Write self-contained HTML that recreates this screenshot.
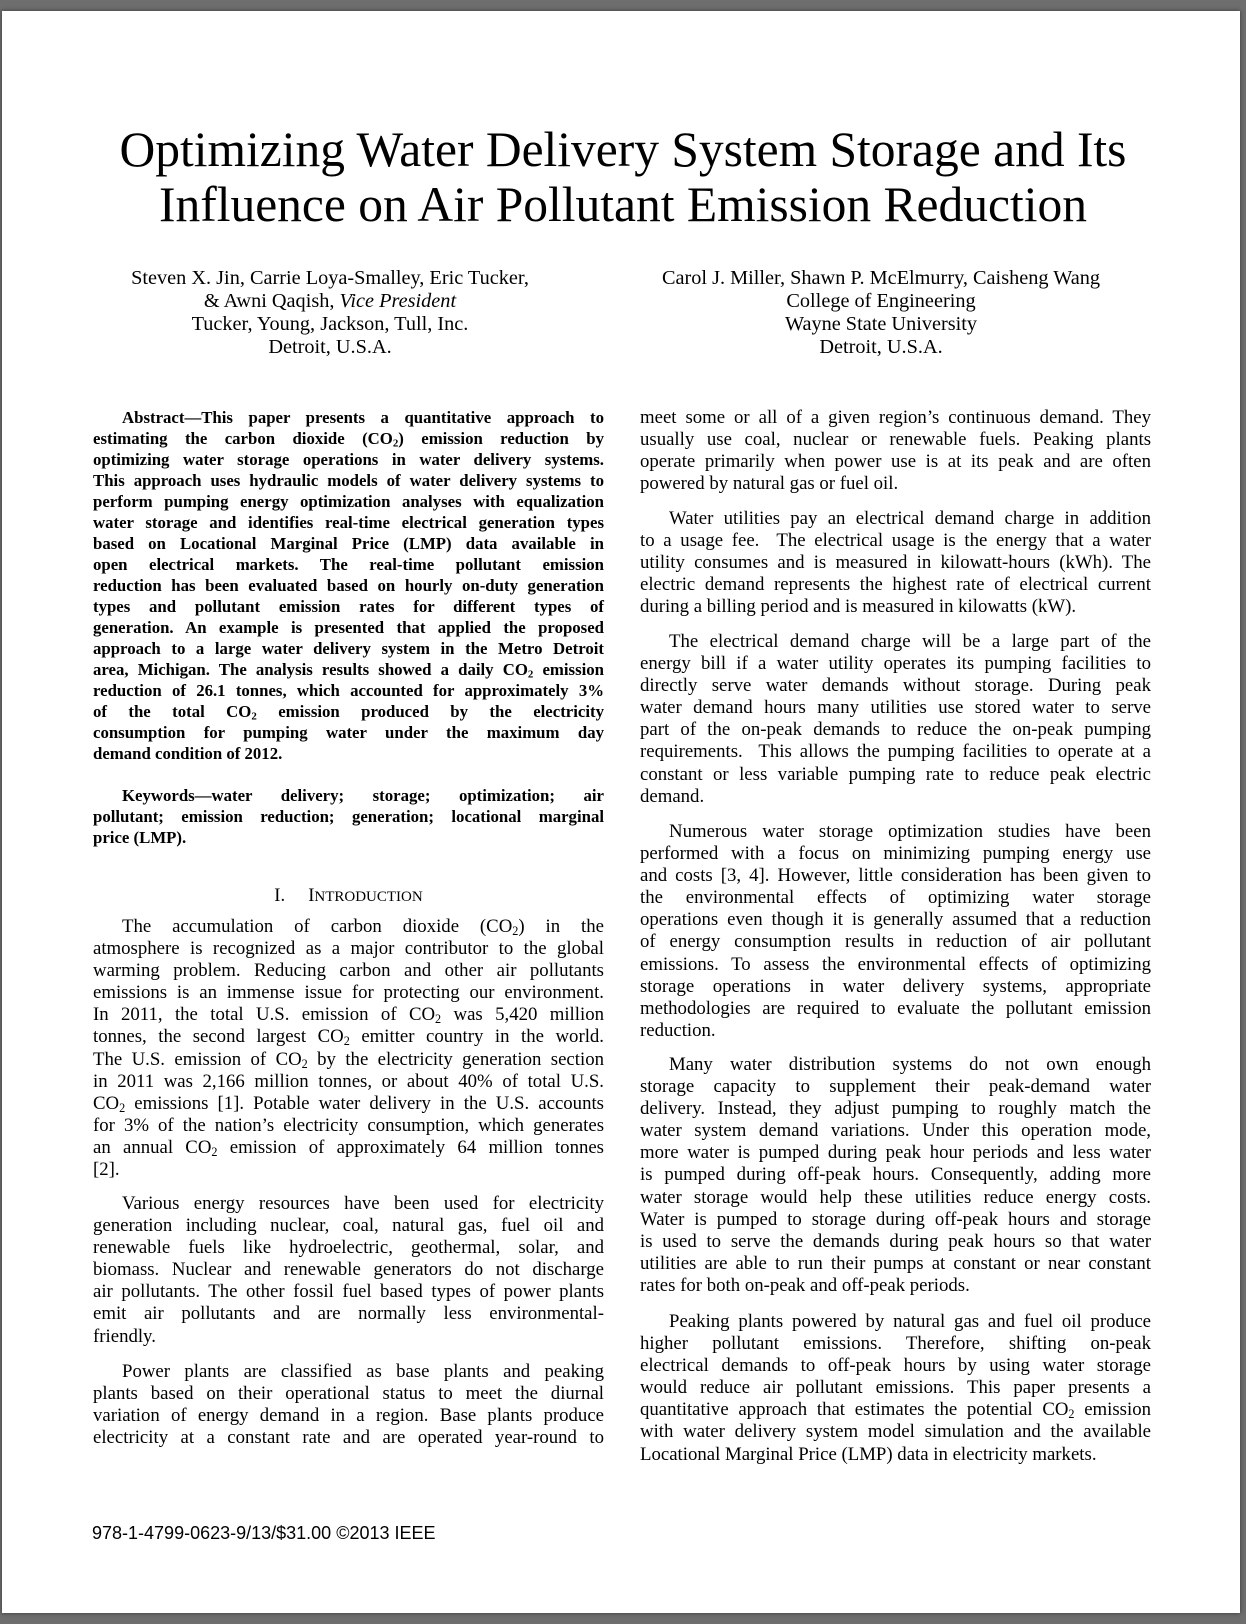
<!DOCTYPE html>
<html><head><meta charset="utf-8"><style>
html,body{margin:0;padding:0}
body{width:1246px;height:1624px;background:#6e6e6e;position:relative;overflow:hidden;font-family:"Liberation Serif",serif;color:#000}
#page{position:absolute;left:2px;top:11px;width:1238px;height:1602px;background:#fff;box-shadow:0 0 4px #333}
.t{position:absolute;left:0;width:1246px;text-align:center;font-size:49.5px;line-height:55px}
.au{position:absolute;text-align:center;font-size:20.3px;line-height:23px;width:560px}
.p{position:absolute;width:511px;font-size:18.8px;line-height:22.1px}
.p span,.a span{display:block;text-align:justify;text-align-last:justify;white-space:nowrap}
.p span.l,.a span.l{text-align-last:left}
.p span.i,.a span.i{text-indent:29px}
.a{position:absolute;left:93px;width:511px;font-size:16.8px;line-height:21px;font-weight:bold}
sub{font-size:0.65em;vertical-align:-0.25em;line-height:0}
.L{left:93px}.R{left:640px}
</style></head><body>
<div id="page"></div>
<div class="t" style="top:122px">Optimizing Water Delivery System Storage and Its</div>
<div class="t" style="top:177px">Influence on Air Pollutant Emission Reduction</div>
<div class="au" style="left:50px;top:267px">Steven X. Jin, Carrie Loya-Smalley, Eric Tucker,<br>&amp; Awni Qaqish, <i>Vice President</i><br>Tucker, Young, Jackson, Tull, Inc.<br>Detroit, U.S.A.</div>
<div class="au" style="left:601px;top:267px">Carol J. Miller, Shawn P. McElmurry, Caisheng Wang<br>College of Engineering<br>Wayne State University<br>Detroit, U.S.A.</div>

<div class="a" style="top:407px">
<span class="i">Abstract—This paper presents a quantitative approach to</span>
<span>estimating the carbon dioxide (CO<sub>2</sub>) emission reduction by</span>
<span>optimizing water storage operations in water delivery systems.</span>
<span>This approach uses hydraulic models of water delivery systems to</span>
<span>perform pumping energy optimization analyses with equalization</span>
<span>water storage and identifies real-time electrical generation types</span>
<span>based on Locational Marginal Price (LMP) data available in</span>
<span>open electrical markets. The real-time pollutant emission</span>
<span>reduction has been evaluated based on hourly on-duty generation</span>
<span>types and pollutant emission rates for different types of</span>
<span>generation. An example is presented that applied the proposed</span>
<span>approach to a large water delivery system in the Metro Detroit</span>
<span>area, Michigan. The analysis results showed a daily CO<sub>2</sub> emission</span>
<span>reduction of 26.1 tonnes, which accounted for approximately 3%</span>
<span>of the total CO<sub>2</sub> emission produced by the electricity</span>
<span>consumption for pumping water under the maximum day</span>
<span class="l">demand condition of 2012.</span>
</div>
<div class="a" style="top:785px">
<span class="i">Keywords—water delivery; storage; optimization; air</span>
<span>pollutant; emission reduction; generation; locational marginal</span>
<span class="l">price (LMP).</span>
</div>
<div style="position:absolute;left:93px;width:511px;top:885px;text-align:center;font-size:18.5px;line-height:22px">I.&nbsp;&nbsp;&nbsp;&nbsp;&nbsp;I<span style="font-size:15px">NTRODUCTION</span></div>

<div class="p L" style="top:916px">
<span class="i">The accumulation of carbon dioxide (CO<sub>2</sub>) in the</span>
<span>atmosphere is recognized as a major contributor to the global</span>
<span>warming problem. Reducing carbon and other air pollutants</span>
<span>emissions is an immense issue for protecting our environment.</span>
<span>In 2011, the total U.S. emission of CO<sub>2</sub> was 5,420 million</span>
<span>tonnes, the second largest CO<sub>2</sub> emitter country in the world.</span>
<span>The U.S. emission of CO<sub>2</sub> by the electricity generation section</span>
<span>in 2011 was 2,166 million tonnes, or about 40% of total U.S.</span>
<span>CO<sub>2</sub> emissions [1]. Potable water delivery in the U.S. accounts</span>
<span>for 3% of the nation’s electricity consumption, which generates</span>
<span>an annual CO<sub>2</sub> emission of approximately 64 million tonnes</span>
<span class="l">[2].</span>
</div>
<div class="p L" style="top:1193px">
<span class="i">Various energy resources have been used for electricity</span>
<span>generation including nuclear, coal, natural gas, fuel oil and</span>
<span>renewable fuels like hydroelectric, geothermal, solar, and</span>
<span>biomass. Nuclear and renewable generators do not discharge</span>
<span>air pollutants. The other fossil fuel based types of power plants</span>
<span>emit air pollutants and are normally less environmental-</span>
<span class="l">friendly.</span>
</div>
<div class="p L" style="top:1361px">
<span class="i">Power plants are classified as base plants and peaking</span>
<span>plants based on their operational status to meet the diurnal</span>
<span>variation of energy demand in a region. Base plants produce</span>
<span>electricity at a constant rate and are operated year-round to</span>
</div>

<div class="p R" style="top:407px">
<span>meet some or all of a given region’s continuous demand. They</span>
<span>usually use coal, nuclear or renewable fuels. Peaking plants</span>
<span>operate primarily when power use is at its peak and are often</span>
<span class="l">powered by natural gas or fuel oil.</span>
</div>
<div class="p R" style="top:508px">
<span class="i">Water utilities pay an electrical demand charge in addition</span>
<span>to a usage fee.&nbsp; The electrical usage is the energy that a water</span>
<span>utility consumes and is measured in kilowatt-hours (kWh). The</span>
<span>electric demand represents the highest rate of electrical current</span>
<span class="l">during a billing period and is measured in kilowatts (kW).</span>
</div>
<div class="p R" style="top:631px">
<span class="i">The electrical demand charge will be a large part of the</span>
<span>energy bill if a water utility operates its pumping facilities to</span>
<span>directly serve water demands without storage. During peak</span>
<span>water demand hours many utilities use stored water to serve</span>
<span>part of the on-peak demands to reduce the on-peak pumping</span>
<span>requirements.&nbsp; This allows the pumping facilities to operate at a</span>
<span>constant or less variable pumping rate to reduce peak electric</span>
<span class="l">demand.</span>
</div>
<div class="p R" style="top:821px">
<span class="i">Numerous water storage optimization studies have been</span>
<span>performed with a focus on minimizing pumping energy use</span>
<span>and costs [3, 4]. However, little consideration has been given to</span>
<span>the environmental effects of optimizing water storage</span>
<span>operations even though it is generally assumed that a reduction</span>
<span>of energy consumption results in reduction of air pollutant</span>
<span>emissions. To assess the environmental effects of optimizing</span>
<span>storage operations in water delivery systems, appropriate</span>
<span>methodologies are required to evaluate the pollutant emission</span>
<span class="l">reduction.</span>
</div>
<div class="p R" style="top:1054px">
<span class="i">Many water distribution systems do not own enough</span>
<span>storage capacity to supplement their peak-demand water</span>
<span>delivery. Instead, they adjust pumping to roughly match the</span>
<span>water system demand variations. Under this operation mode,</span>
<span>more water is pumped during peak hour periods and less water</span>
<span>is pumped during off-peak hours. Consequently, adding more</span>
<span>water storage would help these utilities reduce energy costs.</span>
<span>Water is pumped to storage during off-peak hours and storage</span>
<span>is used to serve the demands during peak hours so that water</span>
<span>utilities are able to run their pumps at constant or near constant</span>
<span class="l">rates for both on-peak and off-peak periods.</span>
</div>
<div class="p R" style="top:1311px">
<span class="i">Peaking plants powered by natural gas and fuel oil produce</span>
<span>higher pollutant emissions. Therefore, shifting on-peak</span>
<span>electrical demands to off-peak hours by using water storage</span>
<span>would reduce air pollutant emissions. This paper presents a</span>
<span>quantitative approach that estimates the potential CO<sub>2</sub> emission</span>
<span>with water delivery system model simulation and the available</span>
<span class="l">Locational Marginal Price (LMP) data in electricity markets.</span>
</div>

<div style="position:absolute;left:92px;top:1522px;font-family:'Liberation Sans',sans-serif;font-size:18px;line-height:22px">978-1-4799-0623-9/13/$31.00 ©2013 IEEE</div>
</body></html>
